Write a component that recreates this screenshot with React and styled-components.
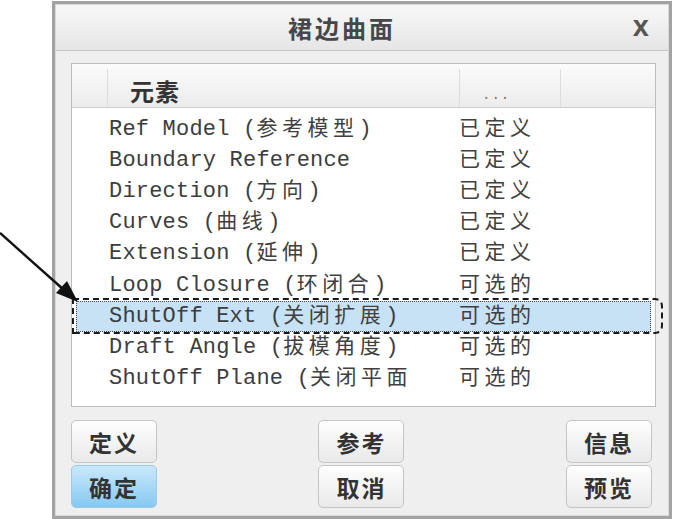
import React from "react";
import styled, { createGlobalStyle } from "styled-components";

const Global = createGlobalStyle`
  html, body { margin: 0; padding: 0; background: #ffffff; }
  #root { width: 674px; height: 519px; overflow: hidden; }
`;

const Page = styled.div`
  position: relative;
  width: 674px;
  height: 519px;
  box-sizing: border-box;
  padding: 1px 0 0 52px;
`;

const Dialog = styled.div`
  width: 620px;
  height: 518px;
  box-sizing: border-box;
  border: 3px solid #a3a3a3;
  box-shadow: inset 0 0 0 1px #d8d8d8;
  background: #efefef;
  display: flex;
  flex-direction: column;
  font-family: "Noto Sans CJK SC", "Liberation Sans", sans-serif;
`;

const TitleBar = styled.div`
  height: 46px;
  margin: 1px 1px 0;
  box-sizing: border-box;
  border-bottom: 1px solid #c4c4c4;
  background: linear-gradient(#f8f8f8, #e5e5e5);
  display: grid;
  grid-template-columns: 1fr auto 1fr;
  align-items: center;
`;

const Title = styled.div`
  grid-column: 2;
  margin-right: 40px;
  font-size: 24px;
  font-weight: 700;
  color: #474747;
  letter-spacing: 3px;
`;

const Close = styled.div`
  grid-column: 3;
  justify-self: end;
  padding-right: 19px;
  font-family: "Liberation Sans", sans-serif;
  font-size: 29px;
  font-weight: 700;
  color: #555;
  line-height: 1;
  margin-top: -3px;
`;

const Body = styled.div`
  flex: 1;
  display: flex;
  flex-direction: column;
  padding: 12px 13px 0 16px;
`;

const List = styled.div`
  height: 344px;
  box-sizing: border-box;
  background: #ffffff;
  border: 1px solid #bdbdbd;
  display: flex;
  flex-direction: column;
`;

const Header = styled.div`
  height: 44px;
  box-sizing: border-box;
  padding-top: 5px;
  background: linear-gradient(#fbfbfb, #ececec);
  border-bottom: 1px solid #cfcfcf;
  display: grid;
  grid-template-columns: 35px 352px 101px 1fr;
`;

const HeaderCell = styled.div`
  border-left: ${(p) => (p.$sep ? "1px solid #dcdcdc" : "none")};
  display: flex;
  align-items: flex-end;
  padding: 0 0 1px ${(p) => p.$pad || 0}px;
  font-size: 24px;
  font-weight: 700;
  color: #333;
  letter-spacing: 1px;
  line-height: 1.2;
`;

const Dots = styled.span`
  font-family: "Liberation Mono", monospace;
  font-size: 14px;
  font-weight: 400;
  color: #7a7a7a;
  letter-spacing: 1px;
  padding-bottom: 2px;
`;

const Rows = styled.div`
  padding: 6px 4px 0;
  display: flex;
  flex-direction: column;
`;

const Row = styled.div`
  position: relative;
  height: 31.1px;
  box-sizing: border-box;
  display: grid;
  grid-template-columns: 383px 1fr;
  align-items: center;
  font-family: "Liberation Mono", "Noto Sans CJK SC", monospace;
  font-size: 22px;
  line-height: 31px;
  letter-spacing: 0.2px;
  color: #3d3d3d;
  white-space: nowrap;
  background: ${(p) => (p.$selected ? "#c6e2f4" : "transparent")};
  outline: ${(p) => (p.$selected ? "1px dotted #4a4a4a" : "none")};
  outline-offset: -1px;

  &::after {
    content: "";
    display: ${(p) => (p.$selected ? "block" : "none")};
    position: absolute;
    top: -3px;
    bottom: -2px;
    left: -4px;
    right: -12px;
    border: 2px dashed #1a1a1a;
    border-radius: 0 8px 8px 0;
    pointer-events: none;
  }
`;

const NameCell = styled.span`
  padding-left: 33px;
`;

const StateCell = styled.span``;

const Cn = styled.span`
  font-family: "Noto Sans CJK SC", sans-serif;
  font-size: 21px;
  line-height: 21px;
  letter-spacing: 4.5px;
  color: #404040;
`;

const Buttons = styled.div`
  margin-top: 13px;
  display: grid;
  grid-template-columns: 1fr 1fr 1fr;
  grid-auto-rows: 43px;
  row-gap: 2px;
  padding-right: 4px;
`;

const Button = styled.div`
  width: 86px;
  box-sizing: border-box;
  justify-self: ${(p) => p.$align};
  display: flex;
  align-items: center;
  justify-content: center;
  border: 1px solid ${(p) => (p.$primary ? "#9cc9e6" : "#c4c4c4")};
  border-radius: 5px;
  background: ${(p) =>
    p.$primary
      ? "linear-gradient(#c9e8fb, #86c9f1)"
      : "linear-gradient(#fefefe, #e9e9e9)"};
  font-size: 23px;
  font-weight: 700;
  color: #333;
  letter-spacing: 2px;
`;

const Arrow = styled.svg`
  position: absolute;
  left: 0;
  top: 0;
  pointer-events: none;
`;

const rows = [
  ["Ref Model (参考模型)", "已定义"],
  ["Boundary Reference", "已定义"],
  ["Direction (方向)", "已定义"],
  ["Curves (曲线)", "已定义"],
  ["Extension (延伸)", "已定义"],
  ["Loop Closure (环闭合)", "可选的"],
  ["ShutOff Ext (关闭扩展)", "可选的"],
  ["Draft Angle (拔模角度)", "可选的"],
  ["ShutOff Plane (关闭平面", "可选的"],
];

function Mixed({ text }) {
  const parts = text.split(/([\u4e00-\u9fff]+)/).filter(Boolean);
  return parts.map((p, i) =>
    /[\u4e00-\u9fff]/.test(p) ? <Cn key={i}>{p}</Cn> : <React.Fragment key={i}>{p}</React.Fragment>
  );
}

export default function App() {
  return (
    <>
      <Global />
      <Page>
        <Dialog>
          <TitleBar>
            <Title>裙边曲面</Title>
            <Close>x</Close>
          </TitleBar>
          <Body>
            <List>
              <Header>
                <HeaderCell />
                <HeaderCell $sep $pad={22}>元素</HeaderCell>
                <HeaderCell $sep $pad={22}><Dots>...</Dots></HeaderCell>
                <HeaderCell $sep />
              </Header>
              <Rows>
                {rows.map(([name, state], i) => (
                  <Row key={i} $selected={i === 6}>
                    <NameCell><Mixed text={name} /></NameCell>
                    <StateCell><Mixed text={state} /></StateCell>
                  </Row>
                ))}
              </Rows>
            </List>
            <Buttons>
              <Button $align="start">定义</Button>
              <Button $align="center">参考</Button>
              <Button $align="end">信息</Button>
              <Button $align="start" $primary>确定</Button>
              <Button $align="center">取消</Button>
              <Button $align="end">预览</Button>
            </Buttons>
          </Body>
        </Dialog>
        <Arrow width="674" height="519" viewBox="0 0 674 519">
          <line x1="0" y1="233" x2="64" y2="290" stroke="#111" strokeWidth="2.4" />
          <polygon points="78,302 56,293 67,281" fill="#111" />
        </Arrow>
      </Page>
    </>
  );
}
